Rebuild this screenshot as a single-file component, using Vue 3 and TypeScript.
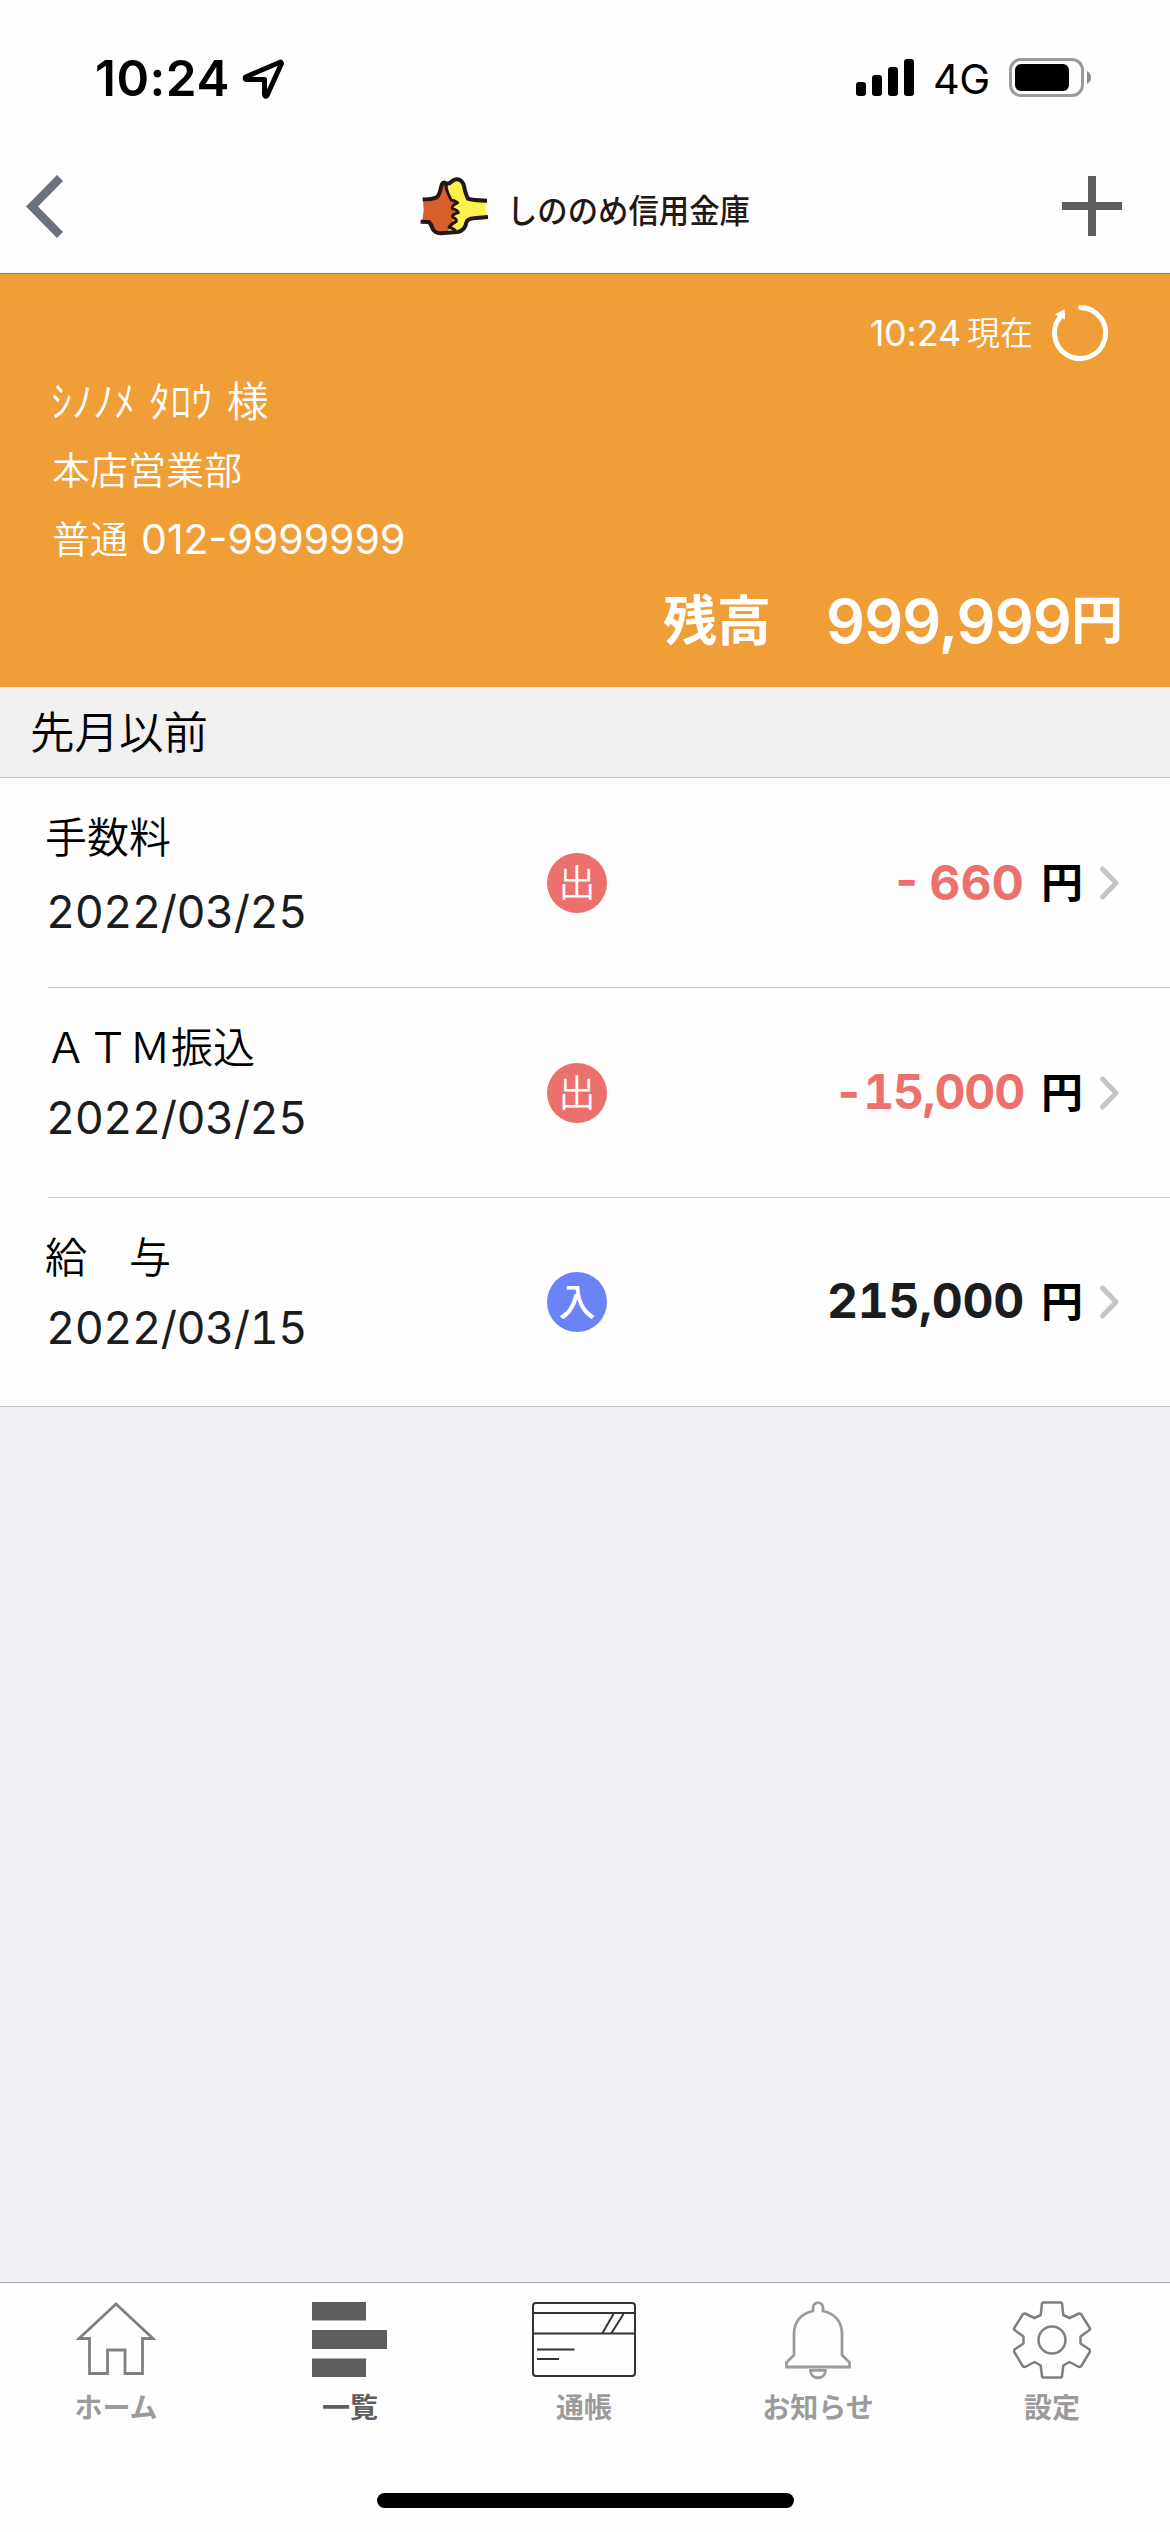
<script setup lang="ts">
interface Entry {
  title: string
  date: string
  kind: 'out' | 'in'
  amount: string
}

const entries: Entry[] = [
  { title: '手数料', date: '2022/03/25', kind: 'out', amount: '- 660' },
  { title: 'ＡＴＭ振込', date: '2022/03/25', kind: 'out', amount: '-15,000' },
  { title: '給　与', date: '2022/03/15', kind: 'in', amount: '215,000' },
]

const tabs = [
  { id: 'home', label: 'ホーム' },
  { id: 'list', label: '一覧' },
  { id: 'book', label: '通帳' },
  { id: 'news', label: 'お知らせ' },
  { id: 'gear', label: '設定' },
]
const activeTab = 'list'
</script>

<template>
  <div class="screen">
    <div class="status">
      <span class="clock">10:24</span>
      <svg class="locate" width="46" height="46" viewBox="0 0 46 46">
        <path d="M40.500 6 L5.500 21 Q4.500 23.500 6.500 23.500 H24.500 V38.500 Q25 41.500 27 39.500 L41.500 7.500 Z" fill="none" stroke="#000" stroke-width="5" stroke-linejoin="round" />
      </svg>
      <svg class="signal" width="58" height="38" viewBox="0 0 58 38">
        <rect x="0" y="23" width="10" height="14" rx="3" />
        <rect x="16" y="16" width="10" height="21" rx="3" />
        <rect x="32" y="8" width="10" height="29" rx="3" />
        <rect x="48" y="0" width="10" height="37" rx="3" />
      </svg>
      <span class="net">4G</span>
      <svg class="battery" width="83" height="39" viewBox="0 0 83 39">
        <rect x="1.500" y="1.500" width="72" height="36" rx="10.500" fill="none" stroke="#9b9b9b" stroke-width="3" />
        <rect x="6" y="6" width="54" height="27" rx="6" />
        <path d="M78 13 Q82 15 82 19.500 Q82 24 78 26 Z" fill="#8e8e8e" />
      </svg>
    </div>

    <header class="nav">
      <svg class="back" width="44" height="66" viewBox="0 0 44 66">
        <path d="M37 5 L9 33.500 L37 62" fill="none" stroke="#6b717d" stroke-width="8.500" />
      </svg>
      <div class="brand">
        <svg width="70" height="60" viewBox="60 50 210 180">
          <path d="M72 122 L118 116 L128 74 Q136 64 146 78 L154 118 L176 130 L160 148 L178 160 L158 176 L168 190 L152 208 L140 222 L112 220 Q102 214 96 192 L70 186 L74 152 Z" fill="#d95f2a" />
          <path d="M148 84 Q172 48 190 72 L204 116 L216 122 L264 124 L258 148 L265 174 L214 176 L202 190 Q198 212 172 212 L152 206 L168 190 L158 176 L178 160 L160 148 L176 130 L154 116 Z" fill="#fdf14d" />
          <path d="M71 120 Q96 121 113 114 Q122 106 126 84 Q131 62 143 74 Q154 72 164 62 Q184 54 194 76 Q200 106 207 118 Q218 123 264 124" fill="none" stroke="#231815" stroke-width="12" stroke-linejoin="round" />
          <path d="M65 187 L90 188 Q98 196 102 210 Q108 221 124 222 L176 218 Q198 214 202 190 Q206 178 224 177 L267 173" fill="none" stroke="#231815" stroke-width="12" stroke-linejoin="round" />
          <path d="M140 76 Q142 94 148 104 Q154 118 157 122 Q166 124 176 130 Q156 140 160 148 Q176 152 178 160 Q156 166 162 174 Q174 180 172 186 Q156 194 150 204 Q160 206 170 214" fill="none" stroke="#231815" stroke-width="9" stroke-linejoin="round" />
        </svg>
        <span class="brand-name">しののめ信用金庫</span>
      </div>
      <svg class="plus" width="60" height="60" viewBox="0 0 60 60">
        <path d="M0 30 H60 M30 0 V60" stroke="#5e5e5e" stroke-width="8" />
      </svg>
    </header>

    <section class="account">
      <div class="asof">
        <span class="asof-time">10:24</span>
        <span class="asof-word">現在</span>
        <svg width="60" height="60" viewBox="0 0 60 60">
          <path d="M30.500 4.500 A25.500 25.500 0 1 1 12.500 11.500" fill="none" stroke="#fff" stroke-width="5" stroke-linecap="round" />
          <path d="M5 11.500 L14.500 6 L15 16.500 Z" fill="#fff" />
        </svg>
      </div>
      <div class="holder">ｼﾉﾉﾒ ﾀﾛｳ 様</div>
      <div class="branch">本店営業部</div>
      <div class="number"><span>普通</span><span class="digits">012-9999999</span></div>
      <div class="balance"><span class="balance-label">残高</span><span class="balance-value">999,999</span><span class="balance-yen">円</span></div>
    </section>

    <h2 class="period">先月以前</h2>

    <ul class="entries">
      <li v-for="(entry, i) in entries" :key="i" :class="['entry', entry.kind]">
        <div class="what">
          <div class="title">{{ entry.title }}</div>
          <div class="date">{{ entry.date }}</div>
        </div>
        <span class="badge">{{ entry.kind === 'out' ? '出' : '入' }}</span>
        <span class="amount">{{ entry.amount }}</span>
        <span class="yen">円</span>
        <svg class="go" width="24" height="40" viewBox="0 0 24 40">
          <path d="M4.500 6 L18 20 L4.500 34" fill="none" stroke="#c5c5c7" stroke-width="5" stroke-linecap="round" stroke-linejoin="round" />
        </svg>
      </li>
    </ul>

    <div class="filler"></div>

    <nav class="tabs">
      <div v-for="tab in tabs" :key="tab.id" :class="['tab', { active: tab.id === activeTab }]">
        <svg v-if="tab.id === 'home'" width="84" height="80" viewBox="0 0 84 80" fill="none" stroke="#808080" stroke-width="2.800">
          <path d="M42 4 L5 38.500 H15.500 V73.500 H33.500 V50 H51 V73.500 H68.500 V38.500 H79 Z" />
        </svg>
        <svg v-else-if="tab.id === 'list'" width="76" height="80" viewBox="0 0 76 80" fill="#5e5e5e">
          <rect x="0" y="2" width="54" height="18.500" />
          <rect x="0" y="30" width="75" height="19" />
          <rect x="0" y="58.500" width="54" height="18.500" />
        </svg>
        <svg v-else-if="tab.id === 'book'" width="104" height="80" viewBox="0 0 104 80" fill="none" stroke="#333" stroke-width="2">
          <rect x="1" y="3" width="102" height="73" rx="3" />
          <path d="M1 13 H103 M1 33.500 H103 M81.500 14 L70.500 33 M91.500 14 L79.500 33 M5 49.500 H42.500 M5 59 H27" />
        </svg>
        <svg v-else-if="tab.id === 'news'" width="70" height="80" viewBox="0 0 70 80" fill="none" stroke="#9b9b9b" stroke-width="2.800">
          <path d="M3.500 67 V62.500 L11 55 V34 C11 22 18 13.500 30 11 V8 C30 .8 40 .8 40 8 V11 C52 13.500 59 22 59 34 V55 L66.500 62.500 V67 Z" />
          <path d="M27.500 70.300 H42.500 C42.500 80.200 27.500 80.200 27.500 70.300 Z" />
        </svg>
        <svg v-else width="80" height="80" viewBox="0 0 80 80" fill="none" stroke="#808080" stroke-width="2.500" stroke-linejoin="round">
          <path d="M31 2.500 H49 L50 3.500 L51.300 15 L57.500 18 L67 13.500 L69 14 L78 28.500 L77.500 30 L68.500 36.500 V43.500 L77.500 49.500 L78 51.500 L69 66.500 L67 67 L57.500 62 L51.300 65.500 L50 76.500 L49 77.500 H31 L30 76.500 L28.700 65.500 L22.500 62 L13 67 L11 66.500 L2 51.500 L2.500 49.500 L11.500 43.500 V36.500 L2.500 30 L2 28.500 L11 14 L13 13.500 L22.500 18 L28.700 15 L30 3.500 Z" />
          <circle cx="40" cy="40" r="13.500" />
        </svg>
        <span class="tab-label">{{ tab.label }}</span>
      </div>
    </nav>
    <div class="home-bar"><i></i></div>
  </div>
</template>

<style>
body {
  background: #fefefe;
}
</style>

<style scoped>
.screen {
  width: 1170px;
  height: 2532px;
  display: flex;
  flex-direction: column;
  background: #fefefe;
  color: #000;
  font-family: Inter, "Noto Sans CJK JP", sans-serif;
  overflow: hidden;
  white-space: nowrap;
}
svg {
  display: block;
  flex: none;
}
.status {
  height: 156px;
  box-sizing: border-box;
  display: flex;
  padding: 48px 78px 0 95px;
}
.status > * {
  flex: none;
}
.clock {
  width: 134px;
  font-size: 49.500px;
  font-weight: 600;
  line-height: 60px;
  letter-spacing: 0.500px;
}
.locate {
  margin: 8px 0 0 11px;
}
.signal {
  margin: 11px 0 0 auto;
}
.net {
  width: 56px;
  margin: 1px 20px 0 19px;
  font-size: 41.500px;
  line-height: 60px;
  letter-spacing: -0.500px;
}
.battery {
  margin-top: 10px;
}
.nav {
  height: 117px;
  display: flex;
  justify-content: space-between;
  border-bottom: 1px solid #a87a42;
}
.back {
  margin: 17px 0 0 23px;
}
.brand {
  display: flex;
  width: 330px;
  margin: 20px 0 0 38px;
}
.brand-name {
  margin: 5px 0 0 18px;
  font-size: 33px;
  line-height: 60px;
  font-weight: 500;
  color: #231815;
  transform: scaleX(0.92);
  transform-origin: 0 50%;
}
.plus {
  margin: 20px 48px 0 0;
}
.account {
  height: 413px;
  background: #f09e38;
  color: #fff;
}
.asof {
  display: flex;
  justify-content: flex-end;
  height: 94px;
  box-sizing: border-box;
  padding: 29px 60px 0 0;
}
.asof-time {
  font-size: 36px;
  line-height: 60px;
  letter-spacing: -0.200px;
}
.asof-word {
  font-size: 33px;
  line-height: 60px;
  font-weight: 350;
  margin: 0 17px 0 6px;
}
.holder,
.branch,
.number {
  height: 68px;
  line-height: 68px;
  padding-left: 52px;
  font-size: 38px;
  font-weight: 350;
}
.holder {
  font-size: 42px;
  word-spacing: 2.500px;
  padding-left: 51px;
}
.number {
  height: 72px;
  line-height: 71px;
  display: flex;
}
.digits {
  font-size: 41px;
  font-weight: 400;
  margin-left: 13px;
}
.balance {
  height: 90px;
  line-height: 90px;
  display: flex;
  justify-content: flex-end;
  padding-right: 47px;
  font-weight: 600;
}
.balance-label {
  font-size: 54px;
  line-height: 92px;
  margin-right: 55px;
}
.balance-value {
  font-size: 61px;
  letter-spacing: -0.900px;
}
.balance-yen {
  font-size: 52px;
}
.period {
  margin: 0;
  height: 90px;
  line-height: 92px;
  padding-left: 30px;
  font-size: 44.500px;
  font-weight: 350;
  background: #f1f1f1;
  border-bottom: 1px solid #c9c9c9;
}
.entries {
  list-style: none;
  margin: 0;
  padding: 0;
  border-bottom: 1px solid #c9c9c9;
}
.entry {
  display: flex;
  align-items: center;
  height: 209px;
  margin-left: 48px;
}
.entry + .entry {
  border-top: 1px solid #c9c9c9;
}
.entry:last-child {
  height: 208px;
}
.what {
  width: 499px;
  margin-left: -3px;
  align-self: flex-start;
}
.title {
  font-size: 42px;
  font-weight: 350;
  line-height: 60px;
  margin-top: 30px;
}
.date {
  font-size: 45px;
  line-height: 60px;
  margin: 10px 0 0 1px;
  color: #1c1c1e;
  letter-spacing: -0.500px;
  font-feature-settings: "tnum";
}
.entry:first-child .date {
  margin-top: 14px;
}
.badge {
  flex: none;
  width: 60px;
  height: 60px;
  margin-left: 3px;
  border-radius: 50%;
  background: #ec706b;
  color: #fff;
  font-size: 37px;
  font-weight: 350;
  line-height: 61px;
  text-align: center;
}
.in .badge {
  background: #6a84f7;
  font-weight: 500;
}
.amount {
  flex: 1;
  text-align: right;
  font-size: 48px;
  line-height: 60px;
  font-weight: 700;
  color: #ec706b;
}
.entry + .entry .amount {
  margin-bottom: 2px;
  font-feature-settings: "tnum";
  letter-spacing: -1.200px;
}
.entry + .in .amount {
  color: #1c1c1e;
  letter-spacing: -0.300px;
}
.yen {
  font-size: 42px;
  line-height: 60px;
  font-weight: 600;
  margin: 0 15px 0 17px;
}
.go {
  margin-right: 48px;
}
.filler {
  flex: 1;
  background: #f1f0f6;
}
.tabs {
  height: 166px;
  border-top: 1px solid #a6a6aa;
  display: flex;
}
.tab {
  flex: none;
  width: 234px;
  display: flex;
  flex-direction: column;
  align-items: center;
  padding-top: 17px;
  color: #9b9b9b;
}
.tab:first-child {
  margin-left: -1px;
}
.tab-label {
  font-size: 28px;
  font-weight: 600;
  line-height: 40px;
  margin-top: 8px;
}
.active {
  color: #5e5e5e;
}
.home-bar {
  height: 83px;
  display: flex;
  justify-content: center;
  align-items: flex-start;
}
.home-bar i {
  width: 417px;
  height: 15px;
  margin-top: 44px;
  border-radius: 8px;
  background: #000;
}
</style>
